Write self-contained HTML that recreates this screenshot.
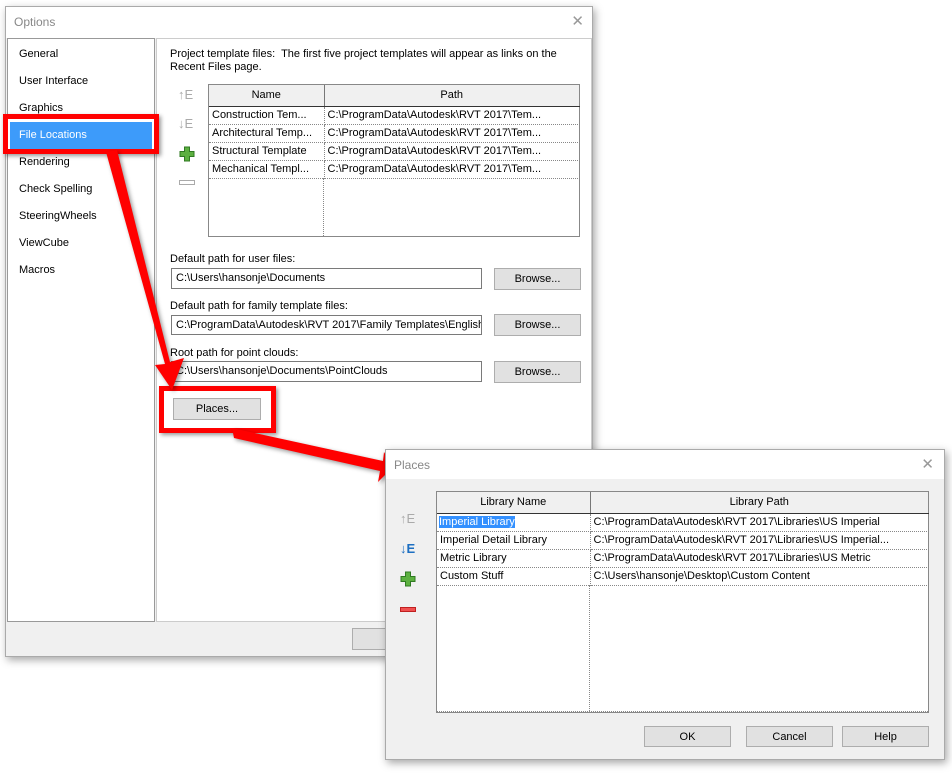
<!DOCTYPE html>
<html><head><meta charset="utf-8"><style>
*{box-sizing:border-box;margin:0;padding:0}
body{width:952px;height:775px;background:#fff;position:relative;overflow:hidden;font-family:"Liberation Sans",sans-serif;font-size:11px;color:#000}
.a{position:absolute}
.dlg{position:absolute;background:#f0f0f0;border:1px solid #aaa;box-shadow:2px 3px 8px rgba(0,0,0,.35)}
.title{position:absolute;left:0;top:0;right:0;background:#fff;color:#888;font-size:12px}
.btn{position:absolute;background:#e1e1e1;border:1px solid #adadad;text-align:center;font-size:11px}
.inp{position:absolute;background:#fff;border:1px solid #7a7a7a;padding:3px 4px;font-size:11px;white-space:nowrap;overflow:hidden}
table{border-collapse:collapse;position:absolute;table-layout:fixed}
td,th{height:18px;font-weight:normal;white-space:nowrap;overflow:hidden;padding:0 3px;border-right:1px dotted #888;border-bottom:1px dotted #888;text-align:left}
th{background:#f0f0f0;text-align:center;height:21px;border-right:1px solid #777;border-bottom:1px solid #333}
.nav div{position:absolute;left:11px;font-size:11px;color:#000}
.x{position:absolute;font-size:15px;color:#999;font-weight:100}
</style></head><body>

<div class="dlg" style="left:5px;top:6px;width:588px;height:651px">
  <div class="title" style="height:31px;padding:8px 0 0 8px">Options</div>
  <div class="x" style="right:8px;top:5px">✕</div>
  <div class="a nav" style="left:1px;top:31px;width:148px;height:584px;background:#fff;border:1px solid #999">
    <div style="top:9px">General</div>
    <div style="top:36px">User Interface</div>
    <div style="top:63px">Graphics</div>
    <div style="left:2px;top:83px;width:142px;height:28px;background:#3d9bfa"></div>
    <div style="top:90px;color:#fff">File Locations</div>
    <div style="top:117px">Rendering</div>
    <div style="top:144px">Check Spelling</div>
    <div style="top:171px">SteeringWheels</div>
    <div style="top:198px">ViewCube</div>
    <div style="top:225px">Macros</div>
  </div>
  <div class="a" style="left:150px;top:31px;width:436px;height:584px;background:#fff;border:1px solid #ccc">
    <div class="a" style="left:13px;top:9px;width:400px;line-height:13px">Project template files:&nbsp; The first five project templates will appear as links on the Recent Files page.</div>
    <div class="a" style="left:51px;top:45px;width:372px;height:153px;border:1px solid #888;background:#fff">
      <table style="left:0;top:0;width:370px">
        <colgroup><col style="width:115px"><col style="width:255px"></colgroup>
        <tr><th>Name</th><th style="border-right:none">Path</th></tr>
        <tr><td>Construction Tem...</td><td>C:\ProgramData\Autodesk\RVT 2017\Tem...</td></tr>
        <tr><td>Architectural Temp...</td><td>C:\ProgramData\Autodesk\RVT 2017\Tem...</td></tr>
        <tr><td>Structural Template</td><td>C:\ProgramData\Autodesk\RVT 2017\Tem...</td></tr>
        <tr><td>Mechanical Templ...</td><td>C:\ProgramData\Autodesk\RVT 2017\Tem...</td></tr>
      </table>
      <div class="a" style="left:114px;top:93px;height:58px;border-left:1px dotted #888"></div>
    </div>
    <div class="a" style="left:21px;top:48px;color:#aaa;font-size:13px">↑E</div>
    <div class="a" style="left:21px;top:77px;color:#aaa;font-size:13px">↓E</div>
    <svg class="a" style="left:22px;top:107px" width="16" height="16"><path d="M5.5 1h5v4.5h4.5v5h-4.5v4.5h-5v-4.5h-4.5v-5h4.5z" fill="#5cb040" stroke="#2f7a22"/></svg>
    <div class="a" style="left:22px;top:141px;width:16px;height:5px;border:1px solid #aaa"></div>

    <div class="a" style="left:13px;top:214px">Default path for user files:</div>
    <div class="inp" style="left:14px;top:229px;width:311px;height:21px">C:\Users\hansonje\Documents</div>
    <div class="btn" style="left:337px;top:229px;width:87px;height:22px;padding-top:4px">Browse...</div>
    <div class="a" style="left:13px;top:261px">Default path for family template files:</div>
    <div class="inp" style="left:14px;top:276px;width:311px;height:20px">C:\ProgramData\Autodesk\RVT 2017\Family Templates\English_</div>
    <div class="btn" style="left:337px;top:275px;width:87px;height:22px;padding-top:4px">Browse...</div>
    <div class="a" style="left:13px;top:308px">Root path for point clouds:</div>
    <div class="inp" style="left:14px;top:322px;width:311px;height:21px">C:\Users\hansonje\Documents\PointClouds</div>
    <div class="btn" style="left:337px;top:322px;width:87px;height:22px;padding-top:4px">Browse...</div>
    <div class="btn" style="left:16px;top:359px;width:88px;height:22px;padding-top:4px">Places...</div>
  </div>
  <div class="btn" style="left:346px;top:621px;width:90px;height:22px;padding-top:4px">OK</div>
</div>

<div class="a" style="left:3px;top:114px;width:156px;height:40px;border:5px solid #f00;box-shadow:2px 2px 4px rgba(0,0,0,.4)"></div>
<div class="a" style="left:159px;top:386px;width:117px;height:47px;border:5px solid #f00;box-shadow:2px 2px 4px rgba(0,0,0,.4)"></div>

<svg class="a" style="left:0;top:0;filter:drop-shadow(2px 2px 2px rgba(0,0,0,.4))" width="952" height="775">
  <polygon points="106,152 117,150 170,362 184,358 172,390 155,365 165,364" fill="#f00"/>
  <polygon points="232,428 234,438 380,471 378,482 393,467 384,452 383,461" fill="#f00"/>
</svg>

<div class="dlg" style="left:385px;top:449px;width:560px;height:311px">
  <div class="title" style="height:29px;padding:8px 0 0 8px">Places</div>
  <div class="x" style="right:10px;top:5px">✕</div>
  <div class="a" style="left:50px;top:41px;width:493px;height:222px;border:1px solid #888;background:#fff">
    <table style="left:0;top:0;width:491px">
      <colgroup><col style="width:153px"><col style="width:338px"></colgroup>
      <tr><th>Library Name</th><th style="border-right:none">Library Path</th></tr>
      <tr><td style="padding-left:2px"><span style="background:#3390ff;color:#fff">Imperial Library</span></td><td>C:\ProgramData\Autodesk\RVT 2017\Libraries\US Imperial</td></tr>
      <tr><td>Imperial Detail Library</td><td>C:\ProgramData\Autodesk\RVT 2017\Libraries\US Imperial...</td></tr>
      <tr><td>Metric Library</td><td>C:\ProgramData\Autodesk\RVT 2017\Libraries\US Metric</td></tr>
      <tr><td>Custom Stuff</td><td>C:\Users\hansonje\Desktop\Custom Content</td></tr>
    </table>
    <div class="a" style="left:152px;top:93px;height:126px;border-left:1px dotted #888"></div>
    <div class="a" style="left:0;top:219px;width:491px;border-top:1px dotted #888"></div>
  </div>
  <div class="a" style="left:14px;top:61px;color:#aaa;font-size:13px">↑E</div>
  <div class="a" style="left:14px;top:91px;color:#1d6fc2;font-size:13px;font-weight:bold">↓E</div>
  <svg class="a" style="left:14px;top:121px" width="16" height="16"><path d="M5.5 1h5v4.5h4.5v5h-4.5v4.5h-5v-4.5h-4.5v-5h4.5z" fill="#5cb040" stroke="#2f7a22"/></svg>
  <div class="a" style="left:14px;top:157px;width:16px;height:5px;background:#f05050;border:1px solid #c02020"></div>
  <div class="btn" style="left:258px;top:276px;width:87px;height:21px;padding-top:4px">OK</div>
  <div class="btn" style="left:360px;top:276px;width:87px;height:21px;padding-top:4px">Cancel</div>
  <div class="btn" style="left:456px;top:276px;width:87px;height:21px;padding-top:4px">Help</div>
</div>
</body></html>
